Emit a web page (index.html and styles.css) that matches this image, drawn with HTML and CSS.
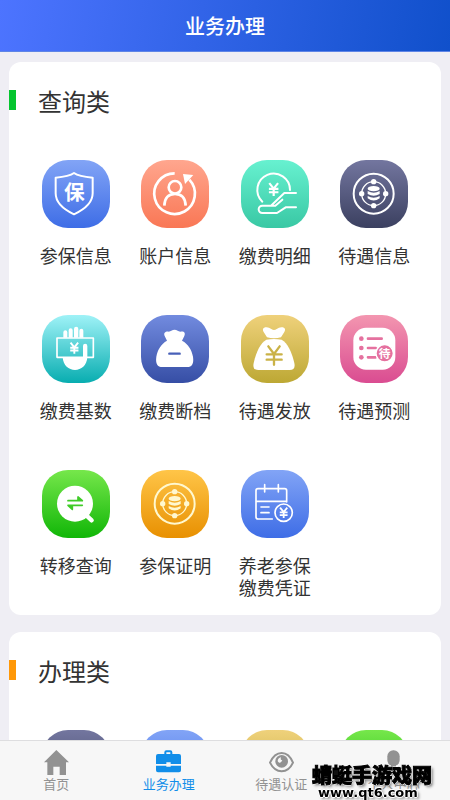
FILE: index.html
```
<!DOCTYPE html>
<html lang="zh-Hans">
<head>
  <meta charset="UTF-8">
  <meta name="viewport" content="width=device-width, initial-scale=1">
  <title>业务办理</title>
  <link rel="stylesheet" href="styles.css">
</head>
<body>

<!-- 公用图形 -->
<svg class="defs" aria-hidden="true">
  <symbol id="yen" viewBox="0 0 40 40">
    <path d="M8 3L20 18L32 3M20 18V38M7 19H33M7 28H33" fill="none" stroke="currentColor" stroke-width="6"/>
  </symbol>
  <symbol id="coins" viewBox="0 0 204 204">
    <circle cx="101" cy="101" r="60" fill="none" stroke="currentColor" stroke-width="6"/>
    <circle cx="101" cy="101" r="36" fill="none" stroke="currentColor" stroke-width="4"/>
    <g fill="currentColor">
      <circle cx="101" cy="65" r="8"/>
      <circle cx="101" cy="137" r="8"/>
      <circle cx="65" cy="101" r="8"/>
      <circle cx="137" cy="101" r="8"/>
      <ellipse cx="101" cy="86" rx="18" ry="8"/>
      <path d="M83 93Q101 103 119 93V102Q101 113 83 102Z"/>
      <path d="M83 108Q101 118 119 108V115Q101 128 83 115Z"/>
    </g>
  </symbol>
</svg>

<header class="header">
  <h1>业务办理</h1>
</header>

<main class="content">
  <section class="card">
    <h2 class="card-title green-mark">查询类</h2>
    <div class="grid">
      <a class="item" href="#">
        <svg class="tile blue" viewBox="0 0 204 204">
          <path class="line" d="M96 39C82 49 62 51 41 53V100C41 132 68 150 96 163C124 150 152 132 152 100V53C130 51 110 49 96 39Z"/>
          <text x="97" y="121" font-size="62">保</text>
        </svg>
        <span>参保信息</span>
      </a>
      <a class="item" href="#">
        <svg class="tile orange" viewBox="0 0 204 204">
          <path class="line bold" d="M101 40A61 61 0 1 0 145 59"/>
          <path class="solid" d="M126 42L157 45L132 72Z"/>
          <circle class="line bold" cx="102" cy="82" r="19"/>
          <path class="line bold" d="M70 137C71 113 84 102 102 102S133 113 134 137"/>
        </svg>
        <span>账户信息</span>
      </a>
      <a class="item" href="#">
        <svg class="tile mint" viewBox="0 0 204 204">
          <path class="line" d="M64 125A49 49 0 1 1 147 90"/>
          <use href="#yen" x="76" y="64" width="44" height="48"/>
          <path class="line" d="M165 99H130L90 137H64A10 10 0 0 0 64 159H108L134 142H165M92 137H103L124 119"/>
        </svg>
        <span>缴费明细</span>
      </a>
      <a class="item" href="#">
        <svg class="tile navy" viewBox="0 0 204 204"><use href="#coins"/></svg>
        <span>待遇信息</span>
      </a>
      <a class="item" href="#">
        <svg class="tile cyan" viewBox="0 0 204 204">
          <rect class="line thin" x="45" y="69" width="109" height="58"/>
          <path class="solid" d="M64 68V52A6 6 0 0 1 76 52V68ZM80 68V46A6 6 0 0 1 92 46V68ZM96 68V42A6 6 0 0 1 109 42V68ZM112 68V47A6 6 0 0 1 124 47V68Z"/>
          <path class="solid" d="M62 127H123V93A6 6 0 0 1 136 93V127C134 152 118 165 99 165S64 152 62 127Z"/>
          <use href="#yen" x="78" y="80" width="38" height="38"/>
        </svg>
        <span>缴费基数</span>
      </a>
      <a class="item" href="#">
        <svg class="tile indigo" viewBox="0 0 204 204">
          <path class="solid" d="M78 77L71 63C67 54 73 49 83 50Q88 49 91 47Q101 42 110 47Q113 49 118 50C130 48 134 54 130 63L123 77C142 87 152 104 156 125C159 146 153 156 138 156H64C49 156 43 146 46 125C50 104 60 87 78 77Z"/>
          <path d="M85 116H116" stroke="#4860b8" stroke-width="7" stroke-linecap="round"/>
        </svg>
        <span>缴费断档</span>
      </a>
      <a class="item" href="#">
        <svg class="tile gold" viewBox="0 0 204 204">
          <path class="solid" d="M78 67L68 51C63 43 67 36 77 37Q84 37 91 42Q99 48 107 42Q114 37 121 37C131 36 135 43 130 51L120 67Q99 73 78 67Z"/>
          <path class="solid" d="M76 74Q99 70 122 74C140 84 153 112 160 144C163 158 158 165 146 165H52C40 165 35 158 38 144C45 112 58 84 76 74Z"/>
          <path d="M82 94L99 117L116 94M99 117V149M77 118H122M77 134H122" fill="none" stroke="#cab247" stroke-width="7" stroke-linecap="round"/>
        </svg>
        <span>待遇发放</span>
      </a>
      <a class="item" href="#">
        <svg class="tile pink" viewBox="0 0 204 204">
          <rect class="solid" x="40" y="38" width="126" height="126" rx="38"/>
          <g fill="#e5719f">
            <circle cx="64" cy="71" r="7"/>
            <circle cx="64" cy="99" r="7"/>
            <circle cx="64" cy="127" r="7"/>
            <path d="M84 71H125M84 99H107M84 127H107" stroke="#e5719f" stroke-width="8" stroke-linecap="round"/>
            <circle cx="134" cy="115" r="26" stroke="#fff" stroke-width="4"/>
          </g>
          <text x="134" y="128" font-size="35">待</text>
        </svg>
        <span>待遇预测</span>
      </a>
      <a class="item" href="#">
        <svg class="tile green" viewBox="0 0 204 204">
          <circle class="solid" cx="99" cy="101" r="54"/>
          <path d="M133 136L149 151" stroke="#fff" stroke-width="13" stroke-linecap="round"/>
          <path d="M78 92H121L108 81V92M121 106H78L91 118V106" fill="#3fcb27" stroke="#3fcb27" stroke-width="5" stroke-linecap="round" stroke-linejoin="round"/>
        </svg>
        <span>转移查询</span>
      </a>
      <a class="item" href="#">
        <svg class="tile amber" viewBox="0 0 204 204"><use href="#coins"/></svg>
        <span>参保证明</span>
      </a>
      <a class="item" href="#">
        <svg class="tile blue" viewBox="0 0 204 204">
          <path class="line thin" d="M94 147H51Q45 147 45 141V62Q45 56 51 56H131Q137 56 137 62V96M71 44V66M112 44V66M45 94H137M60 111H84M60 128H84"/>
          <circle class="line thin" cx="128" cy="128" r="26"/>
          <use href="#yen" x="110" y="110" width="36" height="36"/>
        </svg>
        <span>养老参保<br>缴费凭证</span>
      </a>
    </div>
  </section>

  <section class="card">
    <h2 class="card-title orange-mark">办理类</h2>
    <div class="grid">
      <div class="item"><div class="tile navy"></div></div>
      <div class="item"><div class="tile blue"></div></div>
      <div class="item"><div class="tile gold"></div></div>
      <div class="item"><div class="tile green"></div></div>
    </div>
  </section>
</main>

<nav class="tabbar">
  <a class="tab" href="#">
    <svg viewBox="0 0 75 75"><path d="M37 0L75 37H66V75H47V50H28V75H10V37H0Z"/></svg>
    <span>首页</span>
  </a>
  <a class="tab active" href="#">
    <svg viewBox="0 0 75 75">
      <path fill-rule="evenodd" d="M25 12V7Q25 1 31 1H43Q49 1 49 7V12H69Q75 12 75 18V42H44V37H31V42H0V18Q0 12 6 12ZM31 12H43V7H31Z"/>
      <path d="M0 47H31V50H44V47H75V61Q75 67 69 67H6Q0 67 0 61Z"/>
    </svg>
    <span>业务办理</span>
  </a>
  <a class="tab" href="#">
    <svg viewBox="0 0 75 75">
      <path d="M3 38Q16 9 38 9T72 38Q60 64 38 64T3 38Z" fill="none" stroke="currentColor" stroke-width="6"/>
      <circle cx="38" cy="34" r="19"/>
      <path d="M26 33Q27 24 36 22Q33 31 40 31Q36 40 31 38Q27 37 26 33Z" fill="#f7f7f7"/>
    </svg>
    <span>待遇认证</span>
  </a>
  <a class="tab" href="#">
    <svg viewBox="0 0 75 75">
      <rect x="19" y="1" width="37" height="47" rx="18"/>
      <path d="M30 43H45V51L63 59Q69 62 69 74H6Q6 62 12 59L30 51Z"/>
    </svg>
    <span>个人中心</span>
  </a>
</nav>

<div class="watermark">
  <div class="site-name">蜻蜓手游戏网</div>
  <div class="site-url">www.qt6.com</div>
</div>

</body>
</html>
```
FILE: styles.css
```
body {
  display: flex;
  flex-direction: column;
  height: 100vh;
  margin: 0;
  background-color: #efeef4;
  font-family: "Noto Sans CJK SC", sans-serif;
  color: #333;
}

a {
  color: inherit;
  text-decoration: none;
}

.defs {
  position: absolute;
  width: 0;
  height: 0;
}

.header {
  flex: none;
  box-sizing: border-box;
  height: 52px;
  background: linear-gradient(100deg, #4d74ff, #1050cb);
  border-bottom: 1px solid #5f85e6;
  color: #fff;
  text-align: center;
}

.header h1 {
  margin: 0;
  font-size: 20px;
  font-weight: 500;
  line-height: 52px;
}

.content {
  flex: 1;
  min-height: 0;
  overflow-y: auto;
  scrollbar-width: none;
  padding: 10px 9px 0;
}

.card {
  background-color: #fff;
  border-radius: 12px;
  margin-bottom: 17px;
  padding: 28px 0 17px;
}

.card-title {
  display: flex;
  gap: 22px;
  margin: 0 0 48px;
  font-size: 24px;
  font-weight: 400;
  line-height: 22px;
}

.card-title::before {
  content: "";
  width: 7px;
  height: 20px;
}

.green-mark::before {
  background-color: #05c52f;
}

.orange-mark::before {
  background-color: #ff9807;
}

.grid {
  display: grid;
  grid-template-columns: repeat(4, 1fr);
  row-gap: 49px;
  padding: 0 17px;
}

.item {
  display: flex;
  flex-direction: column;
  align-items: center;
  gap: 16px;
  font-size: 18px;
  line-height: 22px;
}

/* 图标 */
.tile {
  width: 68px;
  height: 68px;
  border-radius: 26px;
  color: #fff;
}

.tile text {
  fill: #fff;
  font-weight: 700;
  text-anchor: middle;
}

.line {
  fill: none;
  stroke: #fff;
  stroke-width: 6;
  stroke-linecap: round;
  stroke-linejoin: round;
}

.line.bold {
  stroke-width: 8;
  stroke-linecap: butt;
}

.line.thin {
  stroke-width: 5;
}

.solid {
  fill: #fff;
}

.blue {
  background: linear-gradient(#82a4f6, #3e6de6);
}

.orange {
  background: linear-gradient(#ffa68e, #f97755);
}

.mint {
  background: linear-gradient(#67f1d0, #39c8a4);
}

.navy {
  background: linear-gradient(#73769f, #3b4060);
}

.cyan {
  background: linear-gradient(#9ff2f7, #08adb0);
}

.indigo {
  background: linear-gradient(#728bdf, #364ea5);
}

.gold {
  background: linear-gradient(#efd17b, #bda834);
}

.pink {
  background: linear-gradient(#f396b0, #da4c91);
}

.green {
  background: linear-gradient(#76e74b, #10b607);
}

.amber {
  background: linear-gradient(#ffc548, #e89001);
  color: #fff8cf;
}

/* 底部导航 */
.tabbar {
  flex: none;
  box-sizing: border-box;
  height: 60px;
  display: grid;
  grid-template-columns: repeat(4, 1fr);
  background-color: #f7f7f7;
  border-top: 1px solid #dedee0;
}

.tab {
  display: flex;
  flex-direction: column;
  align-items: center;
  padding-top: 9px;
  color: #929292;
  font-size: 13px;
  line-height: 18px;
}

.tab svg {
  width: 25px;
  height: 25px;
  fill: currentColor;
}

.tab.active {
  color: #118ee9;
}

.watermark {
  position: fixed;
  right: 18px;
  bottom: 0;
  color: #000;
  text-shadow: 1px 0 #fff, -1px 0 #fff, 0 1px #fff, 0 -1px #fff, 2px 2px 3px #777;
}

.site-name {
  font-size: 20px;
  font-weight: 900;
  line-height: 22px;
  -webkit-text-stroke: 1px #000;
}

.site-url {
  padding-left: 6px;
  font-family: "DejaVu Sans", sans-serif;
  font-size: 13px;
  font-weight: 700;
  line-height: 14px;
}
```
